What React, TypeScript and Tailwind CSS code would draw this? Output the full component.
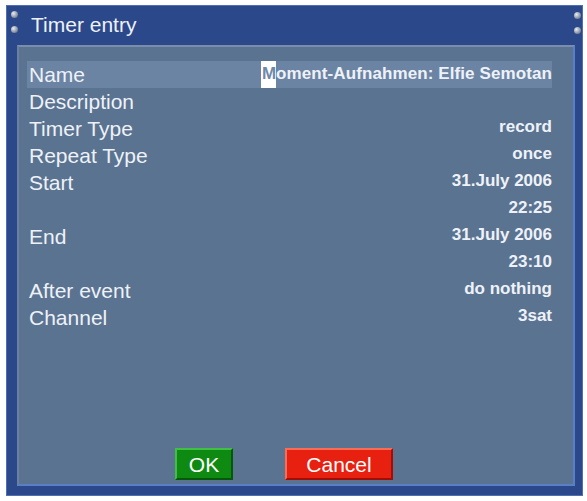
import React from "react";

const rows: { label: string; value: string }[] = [
  { label: "Description", value: "" },
  { label: "Timer Type", value: "record" },
  { label: "Repeat Type", value: "once" },
  { label: "Start", value: "31.July 2006" },
  { label: "", value: "22:25" },
  { label: "End", value: "31.July 2006" },
  { label: "", value: "23:10" },
  { label: "After event", value: "do nothing" },
  { label: "Channel", value: "3sat" },
];

function Screw({ className }: { className: string }) {
  return (
    <div
      className={
        "absolute w-[7px] h-[7px] rounded-full bg-[radial-gradient(circle_at_35%_35%,#e8ecf2,#8a94a4_60%,#4a5466)] " +
        className
      }
    />
  );
}

export default function App() {
  return (
    <div
      className="w-[587px] h-[501px] bg-white pt-[5px] pl-[6px]"
      style={{ fontFamily: '"Liberation Sans", Arial, sans-serif' }}
    >
      <div className="relative w-[577px] h-[491px] bg-[#2a488a] border border-[#4d6fb5] flex flex-col">
        <Screw className="left-[4px] top-[5px]" />
        <Screw className="left-[4px] top-[20px]" />
        <Screw className="right-[1px] top-[6px]" />
        <Screw className="right-[1px] top-[21px]" />
        <div className="h-[39px] pl-[24px] pb-[3px] flex items-center text-[21px] text-[#eef2f8] leading-none">
          Timer entry
        </div>
        <div className="ml-[10px] mr-[7px] mb-[9px] flex-1 bg-[#5a7391] border-2 border-t-[#7a8dab] border-l-[#6a80a3] border-b-[#5b7fc6] border-r-[#5b7fc6] flex flex-col pt-[14px] pl-[8px] pr-[21px]">
          <div className="h-[27px] bg-[#6c84a4] flex items-center justify-between pl-[2px]">
            <span className="text-[21px] text-[#eef2f8] leading-none">Name</span>
            <span className="h-[27px] flex items-center text-[17px] font-bold text-[#eef2f8] leading-none tracking-[0.1px]">
              <span className="bg-white text-[#7088a8] h-[27px] w-[15px] pl-[1px] pb-[3px] flex items-center">M</span>
              <span className="mb-[3px]">oment-Aufnahmen: Elfie Semotan</span>
            </span>
          </div>
          {rows.map((r, i) => (
            <div key={i} className="h-[27px] flex items-center justify-between pl-[2px]">
              <span className="text-[21px] text-[#eef2f8] leading-none">{r.label}</span>
              <span className="text-[17px] font-bold text-[#eef2f8] leading-none mb-[5px]">{r.value}</span>
            </div>
          ))}
          <div className="flex-1" />
          <div className="flex gap-[52px] ml-[148px] mb-[4px]">
            <div className="w-[58px] h-[32px] bg-[#0e8a12] border-2 border-t-[#3fbf44] border-l-[#3fbf44] border-b-[#05580a] border-r-[#05580a] flex items-center justify-center text-[21px] text-white leading-none">
              OK
            </div>
            <div className="w-[108px] h-[32px] bg-[#e8200f] border-2 border-t-[#ff6a55] border-l-[#ff6a55] border-b-[#a00e05] border-r-[#a00e05] flex items-center justify-center text-[21px] text-white leading-none">
              Cancel
            </div>
          </div>
        </div>
      </div>
    </div>
  );
}
